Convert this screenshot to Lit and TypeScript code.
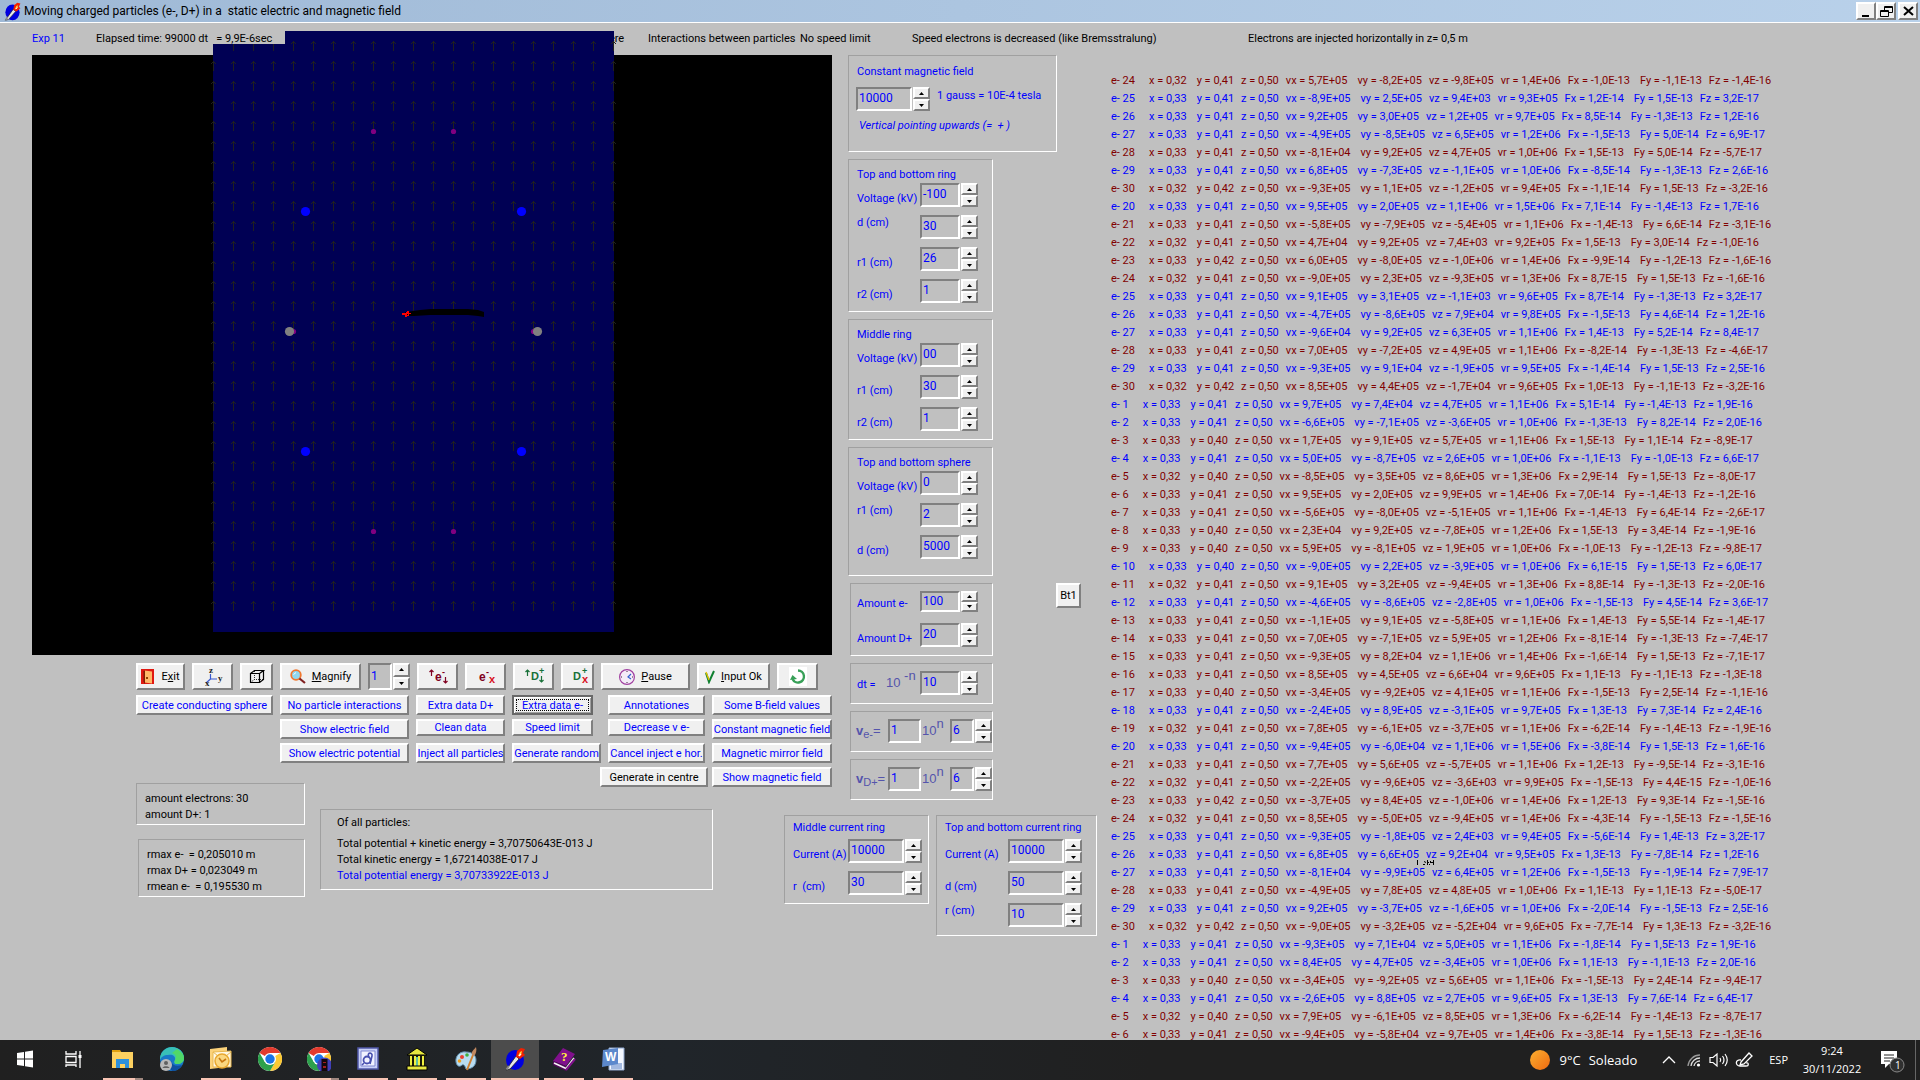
import { LitElement, html, svg, css, nothing } from "lit";
import { customElement, property } from "lit/decorators.js";
import { classMap } from "lit/directives/class-map.js";

/* One line per logged electron: colour, number, x, y, z, vx, vy, vz, vr, Fx, Fy, Fz */
const LOG = `
r 24 0,32 0,41 0,50 5,7E+05 -8,2E+05 -9,8E+05 1,4E+06 -1,0E-13 -1,1E-13 -1,4E-16
b 25 0,33 0,41 0,50 -8,9E+05 2,5E+05 9,4E+03 9,3E+05 1,2E-14 1,5E-13 3,2E-17
b 26 0,33 0,41 0,50 9,2E+05 3,0E+05 1,2E+05 9,7E+05 8,5E-14 -1,3E-13 1,2E-16
b 27 0,33 0,41 0,50 -4,9E+05 -8,5E+05 6,5E+05 1,2E+06 -1,5E-13 5,0E-14 6,9E-17
r 28 0,33 0,41 0,50 -8,1E+04 9,2E+05 4,7E+05 1,0E+06 1,5E-13 5,0E-14 -5,7E-17
b 29 0,33 0,41 0,50 6,8E+05 -7,3E+05 -1,1E+05 1,0E+06 -8,5E-14 -1,3E-13 2,6E-16
r 30 0,32 0,42 0,50 -9,3E+05 1,1E+05 -1,2E+05 9,4E+05 -1,1E-14 1,5E-13 -3,2E-16
b 20 0,33 0,41 0,50 9,5E+05 2,0E+05 1,1E+06 1,5E+06 7,1E-14 -1,4E-13 1,7E-16
r 21 0,33 0,41 0,50 -5,8E+05 -7,9E+05 -5,4E+05 1,1E+06 -1,4E-13 6,6E-14 -3,1E-16
r 22 0,32 0,41 0,50 4,7E+04 9,2E+05 7,4E+03 9,2E+05 1,5E-13 3,0E-14 -1,0E-16
r 23 0,33 0,42 0,50 6,0E+05 -8,0E+05 -1,0E+06 1,4E+06 -9,9E-14 -1,2E-13 -1,6E-16
r 24 0,32 0,41 0,50 -9,0E+05 2,3E+05 -9,3E+05 1,3E+06 8,7E-15 1,5E-13 -1,6E-16
b 25 0,33 0,41 0,50 9,1E+05 3,1E+05 -1,1E+03 9,6E+05 8,7E-14 -1,3E-13 3,2E-17
b 26 0,33 0,41 0,50 -4,7E+05 -8,6E+05 7,9E+04 9,8E+05 -1,5E-13 4,6E-14 1,2E-16
b 27 0,33 0,41 0,50 -9,6E+04 9,2E+05 6,3E+05 1,1E+06 1,4E-13 5,2E-14 8,4E-17
r 28 0,33 0,41 0,50 7,0E+05 -7,2E+05 4,9E+05 1,1E+06 -8,2E-14 -1,3E-13 -4,6E-17
b 29 0,33 0,41 0,50 -9,3E+05 9,1E+04 -1,9E+05 9,5E+05 -1,4E-14 1,5E-13 2,5E-16
r 30 0,32 0,42 0,50 8,5E+05 4,4E+05 -1,7E+04 9,6E+05 1,0E-13 -1,1E-13 -3,2E-16
b 1 0,33 0,41 0,50 9,7E+05 7,4E+04 4,7E+05 1,1E+06 5,1E-14 -1,4E-13 1,9E-16
b 2 0,33 0,41 0,50 -6,6E+05 -7,1E+05 -3,6E+05 1,0E+06 -1,3E-13 8,2E-14 2,0E-16
r 3 0,33 0,40 0,50 1,7E+05 9,1E+05 5,7E+05 1,1E+06 1,5E-13 1,1E-14 -8,9E-17
b 4 0,33 0,41 0,50 5,0E+05 -8,7E+05 2,6E+05 1,0E+06 -1,1E-13 -1,0E-13 6,6E-17
r 5 0,32 0,40 0,50 -8,5E+05 3,5E+05 8,6E+05 1,3E+06 2,9E-14 1,5E-13 -8,0E-17
r 6 0,33 0,41 0,50 9,5E+05 2,0E+05 9,9E+05 1,4E+06 7,0E-14 -1,4E-13 -1,2E-16
r 7 0,33 0,41 0,50 -5,6E+05 -8,0E+05 -5,1E+05 1,1E+06 -1,4E-13 6,4E-14 -2,6E-17
r 8 0,33 0,40 0,50 2,3E+04 9,2E+05 -7,8E+05 1,2E+06 1,5E-13 3,4E-14 -1,9E-16
r 9 0,33 0,40 0,50 5,9E+05 -8,1E+05 1,9E+05 1,0E+06 -1,0E-13 -1,2E-13 -9,8E-17
b 10 0,33 0,40 0,50 -9,0E+05 2,2E+05 -3,9E+05 1,0E+06 6,1E-15 1,5E-13 6,0E-17
r 11 0,32 0,41 0,50 9,1E+05 3,2E+05 -9,4E+05 1,3E+06 8,8E-14 -1,3E-13 -2,0E-16
b 12 0,33 0,41 0,50 -4,6E+05 -8,6E+05 -2,8E+05 1,0E+06 -1,5E-13 4,5E-14 3,6E-17
r 13 0,33 0,41 0,50 -1,1E+05 9,1E+05 -5,8E+05 1,1E+06 1,4E-13 5,5E-14 -1,4E-17
r 14 0,33 0,41 0,50 7,0E+05 -7,1E+05 5,9E+05 1,2E+06 -8,1E-14 -1,3E-13 -7,4E-17
r 15 0,33 0,41 0,50 -9,3E+05 8,2E+04 1,1E+06 1,4E+06 -1,6E-14 1,5E-13 -7,1E-17
r 16 0,33 0,41 0,50 8,5E+05 4,5E+05 6,6E+04 9,6E+05 1,1E-13 -1,1E-13 -1,3E-18
r 17 0,33 0,40 0,50 -3,4E+05 -9,2E+05 4,1E+05 1,1E+06 -1,5E-13 2,5E-14 -1,1E-16
b 18 0,33 0,41 0,50 -2,4E+05 8,9E+05 -3,1E+05 9,7E+05 1,3E-13 7,3E-14 2,4E-16
r 19 0,32 0,41 0,50 7,8E+05 -6,1E+05 -3,7E+05 1,1E+06 -6,2E-14 -1,4E-13 -1,9E-16
b 20 0,33 0,41 0,50 -9,4E+05 -6,0E+04 1,1E+06 1,5E+06 -3,8E-14 1,5E-13 1,6E-16
r 21 0,33 0,41 0,50 7,7E+05 5,6E+05 -5,7E+05 1,1E+06 1,2E-13 -9,5E-14 -3,1E-16
r 22 0,32 0,41 0,50 -2,2E+05 -9,6E+05 -3,6E+03 9,9E+05 -1,5E-13 4,4E-15 -1,0E-16
r 23 0,33 0,42 0,50 -3,7E+05 8,4E+05 -1,0E+06 1,4E+06 1,2E-13 9,3E-14 -1,5E-16
r 24 0,32 0,41 0,50 8,5E+05 -5,0E+05 -9,4E+05 1,4E+06 -4,3E-14 -1,5E-13 -1,5E-16
b 25 0,33 0,41 0,50 -9,3E+05 -1,8E+05 2,4E+03 9,4E+05 -5,6E-14 1,4E-13 3,2E-17
b 26 0,33 0,41 0,50 6,8E+05 6,6E+05 9,2E+04 9,5E+05 1,3E-13 -7,8E-14 1,2E-16
b 27 0,33 0,41 0,50 -8,1E+04 -9,9E+05 6,4E+05 1,2E+06 -1,5E-13 -1,9E-14 7,9E-17
r 28 0,33 0,41 0,50 -4,9E+05 7,8E+05 4,8E+05 1,0E+06 1,1E-13 1,1E-13 -5,0E-17
b 29 0,33 0,41 0,50 9,2E+05 -3,7E+05 -1,6E+05 1,0E+06 -2,0E-14 -1,5E-13 2,5E-16
r 30 0,32 0,42 0,50 -9,0E+05 -3,2E+05 -5,2E+04 9,6E+05 -7,7E-14 1,3E-13 -3,2E-16
b 1 0,33 0,41 0,50 -9,3E+05 7,1E+04 5,0E+05 1,1E+06 -1,8E-14 1,5E-13 1,9E-16
b 2 0,33 0,41 0,50 8,4E+05 4,7E+05 -3,4E+05 1,0E+06 1,1E-13 -1,1E-13 2,0E-16
r 3 0,33 0,40 0,50 -3,4E+05 -9,2E+05 5,6E+05 1,1E+06 -1,5E-13 2,4E-14 -9,4E-17
b 4 0,33 0,41 0,50 -2,6E+05 8,8E+05 2,7E+05 9,6E+05 1,3E-13 7,6E-14 6,4E-17
r 5 0,32 0,40 0,50 7,9E+05 -6,1E+05 8,5E+05 1,3E+06 -6,2E-14 -1,4E-13 -8,7E-17
r 6 0,33 0,41 0,50 -9,4E+05 -5,8E+04 9,7E+05 1,4E+06 -3,8E-14 1,5E-13 -1,3E-16`
  .trim()
  .split("\n")
  .map((line) => line.split(" "));

/* Quantities of a log line; the spaced ones stand further from the one before. */
const QUANTITIES: [name: string, gap: string][] = [
  ["x", "far"], ["y", "spaced"], ["z", ""], ["vx", ""], ["vy", "spaced"],
  ["vz", ""], ["vr", ""], ["Fx", ""], ["Fy", "spaced"], ["Fz", ""],
];

const range = (n: number) => Array.from({ length: n }, (_, i) => i);

/* Upward arrow of the field grid; those under the notch show only their stem. */
const arrow = (c: number, r: number) => {
  const x = 181 + c * 20;
  const y = -14 + r * 20;
  if (r === 0 && c === 0) return "";
  if (r === 0 && c < 4) return `M${x} ${y + 3}h1v7h-1z`;
  return `M${x} ${y}h1v10h-1zM${x - 1} ${y + 1}h3v1h-3zM${x - 2} ${y + 2}h1v1h-1zM${x + 2} ${y + 2}h1v1h-1z`;
};

/* Field plot, 800 x 600; the plotted area rises above the top edge of the black ground. */
const fieldPlot = svg`
  <rect width="800" height="600" fill="#000"/>
  <path d="M181 -11H253V-24H582V577H181Z" fill="#000054"/>
  <path fill="#202020" shape-rendering="crispEdges" d="${range(29)
    .map((r) => range(21).map((c) => arrow(c, r)).join(""))
    .join("")}"/>
  <g fill="#800080">
    <circle cx="341.500" cy="76.500" r="2.600"/><circle cx="421.500" cy="76.500" r="2.600"/>
    <circle cx="341.500" cy="476.500" r="2.600"/><circle cx="421.500" cy="476.500" r="2.600"/>
    <circle cx="261.500" cy="276.500" r="2.600"/><circle cx="501.500" cy="276.500" r="2.600"/>
  </g>
  <g fill="#00f">
    <circle cx="273.500" cy="156.500" r="4.600"/><circle cx="489.500" cy="156.500" r="4.600"/>
    <circle cx="273.500" cy="396.500" r="4.600"/><circle cx="489.500" cy="396.500" r="4.600"/>
  </g>
  <g fill="#808080"><circle cx="257.500" cy="276.500" r="4.600"/><circle cx="505.500" cy="276.500" r="4.600"/></g>
  <path d="M374 257L388 255L398 254H436L446 255L452 257V262L446 261L436 260H398L382 261L374 261Z" fill="#000"/>
  <path d="M370 258h3v-1h2v-1h2v2h2v1h-2v2h-2v1h-2v-2h-3z" fill="#f00"/>
  <path d="M373 257h1v1h-1zM375 259h1v1h-1z" fill="#000"/>`;

const torch = svg`
  <ellipse cx="12" cy="13" rx="9" ry="10" fill="#0000e0"/>
  <path d="M3 23L13 9L16 12L7 22Z" fill="#e8e8e8" stroke="#222" stroke-width=".8"/>
  <path d="M3.500 22.500L6 19" stroke="#888" stroke-width="2"/>
  <path d="M13 10L14 4L18 1L22 2L20 6L22 8L17 12Z" fill="#f42000"/>
  <path d="M15 9L17 5L19 4L18 8Z" fill="#ffd840"/>
  <path d="M16 9L18 7" stroke="#fff" stroke-width="1.200"/>`;

const chrome = svg`
  <circle cx="12" cy="12" r="12" fill="#fff"/>
  <path d="M12 12L1.600 6A12 12 0 0 1 22.400 6H12Z" fill="#e33b2e"/>
  <path d="M12 12L22.400 6A12 12 0 0 1 12 24L17.200 15Z" fill="#fcc934"/>
  <path d="M1.600 6A12 12 0 0 0 12 24L17.200 15L12 12L6.800 15Z" fill="#2da14c"/>
  <circle cx="12" cy="12" r="6" fill="#fff"/><circle cx="12" cy="12" r="4.700" fill="#1a73e8"/>`;

const icons = {
  torch,
  exit: svg`<path d="M0 1h13v15H0z" fill="#e01810"/><path d="M2 3h4v11H2z" fill="#a81810"/><path d="M3.500 2.500l7.500 1v12l-7.500 -1z" fill="#ffb868"/><path d="M3.500 2.500v13" stroke="#802000"/><path d="M5 9h2v2H5z" fill="#904000"/>`,
  axes: svg`<g stroke="#3858d0" fill="none" stroke-width="1.200"><path d="M16.500 9V14H23M16.500 14L12 18"/></g><g font-family="Liberation Serif, serif" font-weight="bold" font-size="9" fill="#222"><text x="15" y="8">z</text><text x="24" y="16">y</text><text x="11" y="21">x</text></g>`,
  cube: svg`<g fill="none" stroke="#000" stroke-width="1.200"><path d="M1.500 4.500H10.500V13.500H1.500ZM1.500 4.500L5.500 1.500H14.500L10.500 4.500M14.500 1.500V10.500L10.500 13.500"/><path d="M5.500 2V10.500H14M5.500 10.500L2 13" stroke-dasharray="1 1" stroke-width=".8"/></g>`,
  lens: svg`<circle cx="6" cy="6" r="4.800" fill="#90d8f0" stroke="#f07830" stroke-width="1.800"/><path d="M3.500 5.500L6 3.500" stroke="#fff"/><path d="M9.500 9.500L15 14" stroke="#802020" stroke-width="2.200"/>`,
  eMove: svg`<g fill="#800020" font-family="Liberation Sans, sans-serif" font-weight="bold"><text x="16" y="16" font-size="12">e</text><text x="23" y="10" font-size="9">-</text></g><path d="M12.500 11V5M10.500 7L12.500 5L14.500 7M26.500 12V18M24.500 16L26.500 18L28.500 16" fill="none" stroke="#800020" stroke-width="1.200"/>`,
  eStop: svg`<g fill="#800020" font-family="Liberation Sans, sans-serif" font-weight="bold"><text x="12" y="16" font-size="12">e</text><text x="19" y="10" font-size="9">-</text><text x="22" y="18" font-size="11" fill="#d81020">x</text></g>`,
  dMove: svg`<g fill="#187038" font-family="Liberation Sans, sans-serif" font-weight="bold"><text x="16" y="15" font-size="11">D</text><text x="24" y="9" font-size="9">+</text></g><path d="M12.500 11V5M10.500 7L12.500 5L14.500 7M26.500 11V17M24.500 15L26.500 17L28.500 15" fill="none" stroke="#187038" stroke-width="1.200"/>`,
  dStop: svg`<g fill="#187038" font-family="Liberation Sans, sans-serif" font-weight="bold"><text x="10" y="15" font-size="11">D</text><text x="19" y="9" font-size="9">+</text><text x="19" y="18" font-size="11" fill="#d81020">x</text></g>`,
  clock: svg`<circle cx="8" cy="8" r="7.400" fill="#f4ecf8" stroke="#a040a0" stroke-width="1.200"/><path d="M8 2v1M8 13v1M2 8h1M13 8h1" stroke="#402040"/><path d="M12 5L9 8L12 10" fill="none" stroke="#3060d0" stroke-width="1.200"/>`,
  check: svg`<path d="M1 3L4 12L9 1" fill="none" stroke="#108030" stroke-width="2"/><path d="M1 2L4 10" stroke="#e0c000" stroke-width="1.400"/>`,
  refresh: svg`<path d="M0 0h18v19H0z" fill="#fff"/><path d="M9 3.500A6 6 0 1 1 3.500 12" fill="none" stroke="#38a058" stroke-width="2.400"/><path d="M1 13L3.500 8L8 12Z" fill="#38a058"/>`,
  min: svg`<path d="M5 13h7v2H5z"/>`,
  restore: svg`<path d="M7.500 4.500h8v6h-8zM7 5.500h9M3.500 8.500h8v6h-8zM3 9.500h9" fill="none" stroke="#000"/><path d="M4 10h7v4H4z" fill="#f0f0f0"/>`,
  close: svg`<path d="M5 5L14 13M14 5L5 13" stroke="#000" stroke-width="2"/>`,
  windows: svg`<path fill="#fff" d="M4 6L11 5V11.500H4ZM12 4.800L20 3.600V11.500H12ZM4 12.500H11V19L4 18ZM12 12.500H20V20.400L12 19.200Z"/>`,
  tasks: svg`<g fill="none" stroke="#fff" stroke-width="1.300"><path d="M4 4V7H14V4M4 9.500H14V15.500H4ZM4 20V18H14V20M18 4V21"/></g><path d="M16.500 8h3v3h-3z" fill="#fff"/>`,
  folder: svg`<path d="M1 3h8l2 3h-10z" fill="#e0a010"/><path d="M1 5h21v16H1z" fill="#fcd060"/><path d="M5 12h13v9h-4v-4h-5v4h-4z" fill="#2c90dc"/>`,
  edge: svg`<circle cx="12" cy="12" r="12" fill="#1878c8"/><path d="M0 11C1 4 6 0 12 0C19 0 24 5 24 11C24 15 21 17 17 17C14 17 14 15 15 13C16 9 12 7 8 8C4 8 1 10 0 13Z" fill="#38c0b8"/><path d="M17 2C22 5 24 8 24 11C24 15 21 17 17 17C14 17 14 15 15 13C17 9 15 7 12 6Z" fill="#50d868"/><path d="M11 14C12 18 16 20 22 18C20 22 16 24 12 24C9 20 9 16 11 14Z" fill="#1050a0"/><circle cx="6" cy="18" r="6" fill="#b8b8b8"/><circle cx="6" cy="16" r="2" fill="#606060"/><path d="M2.500 21C3 18.500 9 18.500 9.500 21Z" fill="#606060"/>`,
  outlook: svg`<path d="M1 2L18 0V20L1 22Z" fill="#fbd27a"/><path d="M4 5L22 4V20H4Z" fill="#fff8e4" stroke="#e8b850"/><path d="M4 5L13 12L22 5" fill="none" stroke="#e8b850"/><circle cx="13" cy="14" r="7" fill="#fbd880" stroke="#e8a830" stroke-width="1.500"/><path d="M10 11L13 15L17 12" fill="none" stroke="#c87810" stroke-width="1.600"/>`,
  chrome,
  chromeUser: svg`${chrome}<circle cx="17.500" cy="18" r="7.500" fill="#4040b8"/><path d="M14.500 12h6v12h-6z" fill="#14080c"/><path d="M16 15h3v1h-3zM16 19h3v2h-3z" fill="#a02020"/>`,
  finder: svg`<path d="M2 1H22V22H2Z" fill="#c8d0f8" stroke="#5058a8" stroke-width="1.500"/><path d="M5 4H19V19H5Z" fill="#f0f2ff" stroke="#8088d0"/><circle cx="11" cy="13" r="3.500" fill="none" stroke="#4850b0" stroke-width="1.800"/><path d="M13 10C10 5 17 5 16 9L14 17M8 16L6 18" fill="none" stroke="#4850b0" stroke-width="1.600"/>`,
  bank: svg`<path d="M12 1L22 8H2Z" fill="#e8e840" stroke="#000"/><path d="M4 8H20V20H4Z" fill="#181808"/><path d="M5 9h2v10H5zM9 9h2v10H9zM13 9h2v10h-2zM17 9h2v10h-2z" fill="#f0f040"/><path d="M11 10h2v9h-2z" fill="#60c0a0"/><path d="M2 19H22V23H2Z" fill="#e8e840" stroke="#000"/>`,
  paint: svg`<path d="M12 5C6 4 1 9 2 15C3 20 6 20 8 18C10 17 11 19 12 22C19 22 22 18 22 13C22 8 18 5 12 5Z" fill="#b8dcf0" stroke="#6090b0"/><circle cx="8" cy="10" r="2" fill="#e84030"/><circle cx="13" cy="8" r="1.800" fill="#40b040"/><circle cx="5.500" cy="14" r="1.800" fill="#f0a020"/><path d="M19 8L13 23" stroke="#d08030" stroke-width="2"/><path d="M18 8C17 4 20 3 22 0C23 3 22 7 20 9Z" fill="#c08860"/>`,
  book: svg`<path d="M1 14L11 1L23 7L14 19Z" fill="#80108c"/><path d="M1 14L14 19V24L1 18Z" fill="#500858"/><path d="M2 16L14 21.500L22 11" fill="none" stroke="#f4f4f4" stroke-width="1.600"/><path d="M14 23L23 12" stroke="#80108c" stroke-width="2"/><text x="9" y="14" font-size="13" font-weight="bold" fill="#fff040" font-family="Liberation Serif, serif">?</text>`,
  word: svg`<path d="M8 1H23V23H8Z" fill="#f4f8ff" stroke="#90a8d0"/><path d="M10 17h11M10 19h11M10 21h11" stroke="#5078c0"/><path d="M2 3L17 1V17L1 20Z" fill="#5c88cc"/><text x="4" y="14" font-size="12" font-weight="bold" fill="#fff" font-family="Liberation Sans, sans-serif">W</text>`,
  sun: svg`<defs><linearGradient id="sun" x2="1" y2="1"><stop stop-color="#fcb030"/><stop offset="1" stop-color="#f06a10"/></linearGradient></defs><circle cx="12" cy="12" r="10" fill="url(#sun)"/>`,
  chevron: svg`<path d="M6 15L12 9L18 15" fill="none" stroke="#fff" stroke-width="1.300"/>`,
  wifi: svg`<g fill="none" stroke="#ddd" stroke-width="1.300"><path d="M6 18A12 12 0 0 1 18 7" stroke="#999"/><path d="M9 18A9 9 0 0 1 18 10"/><path d="M12 18A6 6 0 0 1 18 13"/></g><circle cx="16.500" cy="17" r="1.600" fill="#fff"/>`,
  sound: svg`<g fill="none" stroke="#fff" stroke-width="1.200"><path d="M3 9.500H6L10 6V18L6 14.500H3Z"/><path d="M13 10Q14.500 12 13 14M15.500 8Q18.500 12 15.500 16M18 6Q22.500 12 18 18"/></g>`,
  pen: svg`<g fill="none" stroke="#fff" stroke-width="1.300"><path d="M9 14L17 5L20 8L12 16L8 17Z"/><path d="M9 12C3 11 3 18 8 18H14C17 18 17 14 14 15"/></g>`,
  notes: svg`<path d="M4 4H20V17H12L8 21V17H4Z" fill="#fff"/><path d="M7 8h10M7 11h10M7 14h6" stroke="#222"/><circle cx="20" cy="18" r="7" fill="#303030" stroke="#888"/><text x="18" y="22" font-size="10" fill="#fff" font-family="Open Sans, sans-serif">1</text>`,
};

const glyph = (name: keyof typeof icons, w = 24, h = w) =>
  html`<svg class="glyph" width=${w} height=${h} viewBox="0 0 ${w} ${h}" aria-hidden="true">${icons[name]}</svg>`;

const scaled = (name: keyof typeof icons, size: number) =>
  html`<svg class="glyph" width=${size} height=${size} viewBox="0 0 24 24" aria-hidden="true">${icons[name]}</svg>`;

/* Edit box with up and down buttons; wide, narrow and short pick its size. */
@customElement("spin-edit")
class SpinEdit extends LitElement {
  @property() value = "";
  @property() label = "";

  static styles = css`
    :host { display: inline-flex; gap: 1px; height: 24px; }
    :host([short]) { height: 21px; }
    input {
      box-sizing: border-box; width: 40px; padding: 0 0 2px 1px; border-radius: 0;
      border: 2px solid; border-color: #808080 #fff #fff #808080; outline: 0;
      background: #c0c0c0; color: #00f;
      font: 12px/18px Roboto, "Liberation Sans", sans-serif;
    }
    :host([wide]) input { width: 56px; }
    :host([narrow]) input { width: 24px; }
    .pair { display: flex; flex-direction: column; width: 17px; }
    button {
      flex: 1; display: grid; place-items: center; padding: 0; min-height: 0; border-radius: 0;
      border: 2px solid; border-color: #fff #808080 #808080 #fff; background: #f0f0f0;
    }
    svg { display: block; }
  `;

  render() {
    return html`
      <input type="text" aria-label=${this.label} .value=${this.value} />
      <span class="pair">
        <button aria-label="Increase ${this.label}"><svg width="5" height="3" viewBox="0 0 5 3"><path d="M0 3L2.500 0L5 3Z" /></svg></button>
        <button aria-label="Decrease ${this.label}"><svg width="5" height="3" viewBox="0 0 5 3"><path d="M0 0L2.500 3L5 0Z" /></svg></button>
      </span>`;
  }
}

type Param = [label: string, value: string, high?: boolean];

@customElement("app-root")
class AppRoot extends LitElement {
  static styles = css`
    :host {
      display: flex; flex-direction: column; height: 100vh; overflow: hidden;
      background: #c0c0c0; color: #000;
      font: 11px/16px Roboto, "Liberation Sans", sans-serif;
    }
    .glyph { display: block; flex: none; }
    p, h1, h2, ol { margin: 0; padding: 0; font: inherit; list-style: none; white-space: pre; }

    .titlebar {
      display: flex; align-items: center; height: 22px; padding: 0 2px 0 3px; gap: 2px;
      border-bottom: 1px solid #fff; background: linear-gradient(90deg, #9fb9d6, #b9d1ea);
    }
    .titlebar h1 { flex: 1; font: 12px/20px Roboto, "Open Sans", sans-serif; }
    .winbtns { display: flex; }
    .winbtns .btn { width: 20px; height: 18px; padding: 0; }
    .winbtns .btn:last-child { margin-left: 2px; }

    .work { flex: 1; min-height: 0; display: flex; overflow: hidden; }
    .bench { flex: none; }
    .status { display: flex; align-items: center; width: 0; height: 32px; padding: 0 0 0 32px; }
    .status p { flex: none; }
    .status .exp { color: #00f; width: 64px; }
    .status .time { width: 495px; }
    .status .sphere { width: 57px; }
    .status .inter { width: 152px; }
    .status .limit { width: 112px; }
    .status .speed { width: 336px; }
    .upper { display: flex; gap: 16px; padding-left: 32px; }
    .plot { display: block; overflow: visible; position: relative; }

    .btn {
      display: flex; align-items: center; justify-content: center; gap: 6px; padding: 0 2px; border-radius: 0;
      border: 2px solid; border-color: #fff #808080 #808080 #fff; background: #f0f0f0; color: #000;
      font: inherit; white-space: pre;
    }
    .tools { display: flex; gap: 7px; height: 27px; margin: 8px 0 5px 104px; }
    .tools .btn { padding: 0; }
    .w33 { width: 33px; } .w41 { width: 41px; } .w49 { width: 49px; }
    .w73 { width: 73px; } .w81 { width: 81px; } .w89 { width: 89px; }
    .tools spin-edit { height: 27px; }
    .commands {
      display: grid; margin-left: 104px; gap: 4px 7px;
      grid-template-columns: 137px 129px 89px 89px 97px 120px; grid-auto-rows: 20px;
    }
    .commands .btn { color: #00f; padding: 2px 0 0; }
    .commands .c1 { grid-column: 1; } .commands .c2 { grid-column: 2; } .commands .c3 { grid-column: 3; }
    .commands .c4 { grid-column: 4; } .commands .c5 { grid-column: 5; } .commands .c6 { grid-column: 6; }
    .commands .low { height: 17px; padding: 0; }
    .commands .trim { margin-right: 8px; }
    .commands .centre { grid-column: 4 / 6; justify-self: end; width: 108px; margin-right: -3px; color: #000; }
    .commands .focus { border-color: #696969; outline: 1px dotted #000; outline-offset: -5px; box-shadow: inset 1px 1px #fff, inset -1px -1px #a0a0a0; }

    .panel { box-sizing: border-box; border: 1px solid; border-color: #a0a0a0 #fff #fff #a0a0a0; }
    .blue { color: #00f; }
    .params { display: flex; flex-direction: column; align-items: flex-start; gap: 7px; width: 209px; }
    .field { width: 209px; padding: 8px 7px 17px; display: grid; gap: 7px; }
    .field .line { display: flex; gap: 7px; }
    .field em { padding-left: 2px; font-style: italic; }
    .set { width: 145px; padding: 7px 7px 8px; }
    .set.roomy { padding-bottom: 16px; }
    .set h2, .field h2, .field p { padding-left: 1px; }
    .field .line p { padding: 1px 0 0; }
    .rows { display: grid; gap: 8px 0; grid-template-columns: 64px auto; justify-content: start; }
    .rows label { align-self: end; padding-left: 1px; white-space: pre; }
    .rows label.high { align-self: start; }
    .inset { width: 143px; margin-left: 2px; padding: 7px 5px 8px; }
    .inset .rows { gap: 11px 0; }
    .power { display: flex; align-items: flex-start; height: 41px; margin-left: 2px; padding: 7px 0 0 5px; width: 143px; }
    .math { color: #5454ac; font: 13px/24px "Liberation Sans", sans-serif; height: 24px; white-space: pre; }
    .math sup { font-size: 13px; line-height: 0; vertical-align: 7px; }
    .math sub { font-size: 11px; line-height: 0; vertical-align: -3px; }
    .math b { font-size: 13px; }
    .power .dt { width: 29px; padding-left: 1px; line-height: 28px; color: #00f; }
    .power .exp10 { width: 34px; }
    .power .vel { width: 32px; }
    .power .ten { width: 28px; padding-left: 1px; }
    .edit {
      box-sizing: border-box; width: 33px; height: 24px; padding: 0 0 2px 1px; border-radius: 0;
      border: 2px solid; border-color: #808080 #fff #fff #808080; background: #c0c0c0; color: #00f;
      font: 12px/18px Roboto, "Liberation Sans", sans-serif;
    }
    .aside { width: 25px; height: 25px; padding: 0; margin: 528px 0 0 -17px; }

    .lower { display: flex; align-items: flex-start; margin: -17px 0 0 136px; gap: 7px; }
    .counts { display: grid; gap: 14px; width: 169px; margin-right: 8px; }
    .counts .panel { padding: 7px 8px 1px; }
    .counts .panel + .panel { margin-left: 2px; }
    .energy { width: 393px; height: 81px; margin: 26px 64px 0 0; padding: 5px 16px; }
    .energy .first { margin-bottom: 5px; }
    .current { margin-top: 32px; padding: 4px 7px 8px; }
    .current h2 { padding-left: 1px; }
    .current .rows { margin-top: 3px; }
    .middle { width: 145px; } .outer { width: 161px; }
    .middle .rows { grid-template-columns: 56px auto; }
    .outer .rows { grid-template-columns: 64px auto; }

    .log { flex: 1; min-width: 0; padding: 49px 0 0 14px; position: relative; }
    .log li { display: flex; gap: 7px; line-height: 18px; color: #800000; }
    .log li.b { color: #00f; }
    .log .spaced { margin-left: 3px; }
    .log .far { margin-left: 7px; }
    .busy { position: absolute; left: 320px; top: 837px; }

    .taskbar { display: flex; flex: none; height: 40px; background: linear-gradient(90deg, #202020, #20252a 35%, #202020 60%); color: #fff; font: 11px/18px "Open Sans", "Noto Sans", sans-serif; }
    .apps { display: flex; flex: 1; }
    .app { display: grid; place-items: center; width: 49px; padding: 0 4px; border: 0; background: none; }
    .app .face { box-sizing: border-box; display: grid; place-items: center; width: 40px; height: 40px; border-bottom: 2px solid transparent; }
    .app.open .face { border-bottom-color: #f8c4b4; }
    .app.many .face { border-image: linear-gradient(90deg, #f8c4b4 78%, #a08880 78%) 2; border-width: 0 0 2px; }
    .app.active { padding: 0; }
    .app.active .face { width: 48px; background: #4c4c4c; }
    .tray { display: flex; align-items: center; }
    .tray .weather { display: flex; align-items: center; gap: 8px; font-size: 13px; margin-right: 20px; }
    .tray .status-icons { display: flex; gap: 1px; margin-right: 9px; }
    .tray time { width: 68px; margin-left: 10px; text-align: center; }
    .tray .notes { width: 42px; margin: 0 3px 0 4px; display: grid; place-items: center; }
    .tray .edge { align-self: stretch; width: 4px; border-left: 1px solid #666; }
  `;

  private rows(id: string, list: Param[], wide = false) {
    return html`<div class="rows">
      ${list.map(
        ([label, value, high], i) => html`
          <label class=${classMap({ high: !!high })} for="${id}${i}">${label}</label>
          <spin-edit id="${id}${i}" ?wide=${wide} label=${label} .value=${value}></spin-edit>`
      )}
    </div>`;
  }

  private set(id: string, title: string, list: Param[], roomy = false) {
    return html`<section class="panel set blue ${roomy ? "roomy" : ""}">
      <h2>${title}</h2>
      ${this.rows(id, list)}
    </section>`;
  }

  private velocity(sub: string) {
    return html`<section class="panel power blue">
      <span class="math vel"><b>v</b><sub>${sub}</sub>=</span>
      <input class="edit" type="text" aria-label="v ${sub}" .value=${"1"} />
      <span class="math ten">10<sup>n</sup></span>
      <spin-edit narrow label="exponent of v ${sub}" .value=${"6"}></spin-edit>
    </section>`;
  }

  private command(cls: string, text: string) {
    return html`<button class="btn ${cls}">${text}</button>`;
  }

  private logLine([color, n, ...values]: string[]) {
    return html`<li class=${color}><span>e- ${n}</span>${QUANTITIES.map(
      ([name, gap], i) => html`<span class=${gap}>${name} = ${values[i]}</span>`
    )}</li>`;
  }

  private app(name: keyof typeof icons, label: string, state = "") {
    return html`<button class="app ${state}" aria-label=${label}><span class="face">${glyph(name)}</span></button>`;
  }

  render() {
    return html`
      <header class="titlebar">
        ${scaled("torch", 19)}
        <h1>Moving charged particles (e-, D+) in a  static electric and magnetic field</h1>
        <div class="winbtns">
          <button class="btn" aria-label="Minimize">${glyph("min", 18)}</button>
          <button class="btn" aria-label="Restore">${glyph("restore", 18)}</button>
          <button class="btn" aria-label="Close">${glyph("close", 18)}</button>
        </div>
      </header>

      <main class="work">
        <div class="bench">
          <div class="status">
            <p class="exp">Exp 11</p>
            <p class="time">Elapsed time: 99000 dt   = 9,9E-6sec</p>
            <p class="sphere">sphere</p>
            <p class="inter">Interactions between particles</p>
            <p class="limit">No speed limit</p>
            <p class="speed">Speed electrons is decreased (like Bremsstralung)</p>
            <p>Electrons are injected horizontally in z= 0,5 m</p>
          </div>

          <div class="upper">
            <div>
              <svg class="plot" width="800" height="600" viewBox="0 0 800 600" role="img" aria-label="Particle field">${fieldPlot}</svg>
              <div class="tools">
                <button class="btn w49">${glyph("exit", 14, 17)}<span>E<u>x</u>it</span></button>
                <button class="btn w41" aria-label="Axes">${glyph("axes", 37, 23)}</button>
                <button class="btn w33" aria-label="Cube">${glyph("cube", 16, 15)}</button>
                <button class="btn w81">${glyph("lens", 16)}<span><u>M</u>agnify</span></button>
                <spin-edit narrow label="Magnification" .value=${"1"}></spin-edit>
                <button class="btn w41" aria-label="Move electron">${glyph("eMove", 37, 23)}</button>
                <button class="btn w41" aria-label="Remove electron">${glyph("eStop", 37, 23)}</button>
                <button class="btn w41" aria-label="Move D+">${glyph("dMove", 37, 23)}</button>
                <button class="btn w33" aria-label="Remove D+">${glyph("dStop", 29, 23)}</button>
                <button class="btn w89">${glyph("clock", 16)}<span><u>P</u>ause</span></button>
                <button class="btn w73">${glyph("check", 10, 14)}<span><u>I</u>nput Ok</span></button>
                <button class="btn w41" aria-label="Refresh">${glyph("refresh", 18, 19)}</button>
              </div>
              <div class="commands">
                ${this.command("c1", "Create conducting sphere")}
                ${this.command("c2", "No particle interactions")}
                ${this.command("c3", "Extra data D+")}
                ${this.command("c4 trim focus", "Extra data e-")}
                ${this.command("c5", "Annotationes")}
                ${this.command("c6", "Some B-field values")}
                ${this.command("c2", "Show electric field")}
                ${this.command("c3 low", "Clean data")}
                ${this.command("c4 low trim", "Speed limit")}
                ${this.command("c5 low", "Decrease v e-")}
                ${this.command("c6", "Constant magnetic field")}
                ${this.command("c2", "Show electric potential")}
                ${this.command("c3", "Inject all particles")}
                ${this.command("c4", "Generate random")}
                ${this.command("c5", "Cancel inject e hor.")}
                ${this.command("c6", "Magnetic mirror field")}
                ${this.command("centre", "Generate in centre")}
                ${this.command("c6", "Show magnetic field")}
              </div>
            </div>

            <div class="params">
              <section class="panel field blue">
                <h2>Constant magnetic field</h2>
                <div class="line">
                  <spin-edit wide label="Constant magnetic field" .value=${"10000"}></spin-edit>
                  <p>1 gauss = 10E-4 tesla</p>
                </div>
                <p><em>Vertical pointing upwards (=  + )</em></p>
              </section>
              ${this.set("tb", "Top and bottom ring", [
                ["Voltage (kV)", "-100"], ["d (cm)", "30", true], ["r1 (cm)", "26"], ["r2 (cm)", "1"],
              ])}
              ${this.set("mr", "Middle ring", [["Voltage (kV)", "00"], ["r1 (cm)", "30"], ["r2 (cm)", "1"]])}
              ${this.set("sp", "Top and bottom sphere", [
                ["Voltage (kV)", "0"], ["r1 (cm)", "2", true], ["d (cm)", "5000"],
              ], true)}
              <section class="panel inset blue">
                <div class="rows">
                  <label for="amount-e">Amount e-</label>
                  <spin-edit id="amount-e" short label="Amount e-" .value=${"100"}></spin-edit>
                  <label for="amount-d">Amount D+</label>
                  <spin-edit id="amount-d" label="Amount D+" .value=${"20"}></spin-edit>
                </div>
              </section>
              <section class="panel power">
                <span class="dt">dt =</span>
                <span class="math exp10">10<sup> -n</sup></span>
                <spin-edit label="dt exponent" .value=${"10"}></spin-edit>
              </section>
              ${this.velocity("e-")} ${this.velocity("D+")}
            </div>
            <button class="btn aside">Bt1</button>
          </div>

          <div class="lower">
            <div class="counts">
              <section class="panel"><p>amount electrons: 30</p><p>amount D+: 1</p></section>
              <section class="panel">
                <p>rmax e-  = 0,205010 m</p>
                <p>rmax D+ = 0,023049 m</p>
                <p>rmean e-  = 0,195530 m</p>
              </section>
            </div>
            <section class="panel energy">
              <p class="first">Of all particles:</p>
              <p>Total potential + kinetic energy = 3,70750643E-013 J</p>
              <p>Total kinetic energy = 1,67214038E-017 J</p>
              <p class="blue">Total potential energy = 3,70733922E-013 J</p>
            </section>
            <section class="panel current middle blue">
              <h2>Middle current ring</h2>
              ${this.rows("mc", [["Current (A)", "10000"], ["r  (cm)", "30"]], true)}
            </section>
            <section class="panel current outer blue">
              <h2>Top and bottom current ring</h2>
              ${this.rows("oc", [["Current (A)", "10000"], ["d (cm)", "50"], ["r (cm)", "10", true]], true)}
            </section>
          </div>
        </div>

        <div class="log">
          <ol>${LOG.map((row) => this.logLine(row))}</ol>
          <svg class="busy" width="18" height="6" viewBox="0 0 18 6" aria-hidden="true">
            <path d="M.5 0V5M10.500 0V5M12 2.500H10M7.500 1L8.500 3M16.500 0V5M14 2.500H16M13.500 1V3M6 4.500H8M12 4.500H13" fill="none" stroke="#000" />
          </svg>
        </div>
      </main>

      <footer class="taskbar">
        <nav class="apps" aria-label="Taskbar">
          ${this.app("windows", "Start")} ${this.app("tasks", "Task view")}
          ${this.app("folder", "File Explorer", "open many")} ${this.app("edge", "Edge")}
          ${this.app("outlook", "Outlook", "open")} ${this.app("chrome", "Chrome")}
          ${this.app("chromeUser", "Chrome profile", "open many")} ${this.app("finder", "Viewer", "open")}
          ${this.app("bank", "Library", "open")} ${this.app("paint", "Paint", "open")}
          ${this.app("torch", "Moving charged particles", "open active")}
          ${this.app("book", "Help", "open")} ${this.app("word", "Word", "open")}
        </nav>
        <div class="tray">
          <span class="weather">${glyph("sun")}<span>9°C</span><span>Soleado</span></span>
          <span class="status-icons">${glyph("chevron")}${glyph("wifi")}${glyph("sound")}${glyph("pen", 28, 24)}</span>
          <span>ESP</span>
          <time datetime="2022-11-30T09:24">9:24<br />30/11/2022</time>
          <span class="notes">${glyph("notes", 28, 26)}</span>
          <span class="edge">${nothing}</span>
        </div>
      </footer>
    `;
  }
}
